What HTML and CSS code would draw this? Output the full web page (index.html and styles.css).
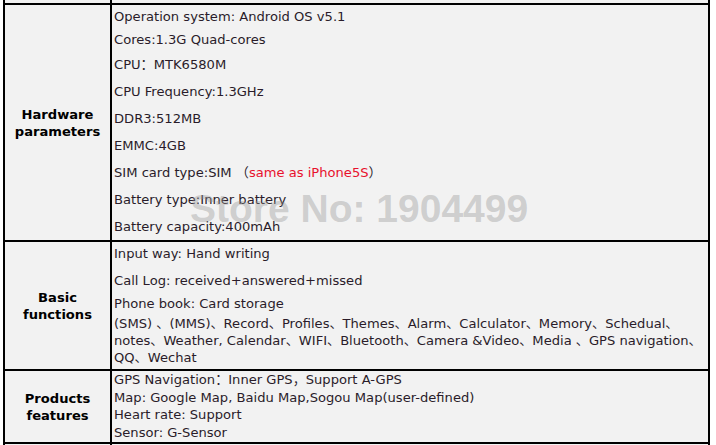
FILE: index.html
```html
<!DOCTYPE html>
<html lang="en">
<head>
  <meta charset="UTF-8">
  <title>Specification</title>
  <link rel="stylesheet" href="styles.css">
</head>
<body>
  <div class="sheet">
    <table class="spec">
      <colgroup>
        <col class="col-label">
        <col class="col-value">
      </colgroup>
      <tr class="row-prev">
        <td class="label"></td>
        <td class="value"></td>
      </tr>
      <tr class="row-hw">
        <td class="label">Hardware<br>parameters</td>
        <td class="value">
          <p class="gap-6">Operation system: Android OS v5.1</p>
          <p class="gap-8">Cores:1.3G Quad-cores</p>
          <p>CPU：MTK6580M</p>
          <p>CPU Frequency:1.3GHz</p>
          <p>DDR3:512MB</p>
          <p>EMMC:4GB</p>
          <p>SIM card type:SIM （<span class="red">same as iPhone5S</span>）</p>
          <p>Battery type:Inner battery</p>
          <p class="last">Battery capacity:400mAh</p>
        </td>
      </tr>
      <tr class="row-basic">
        <td class="label">Basic<br>functions</td>
        <td class="value">
          <p>Input way: Hand writing</p>
          <p class="gap-6">Call Log: received+answered+missed</p>
          <p class="gap-3">Phone book: Card storage</p>
          <p class="last">(SMS) 、(MMS)、Record、Profiles、Themes、Alarm、Calculator、Memory、Schedual、<br>notes、Weather, Calendar、WIFI、Bluetooth、Camera &amp;Video、Media 、GPS navigation、<br>QQ、Wechat</p>
        </td>
      </tr>
      <tr class="row-feat">
        <td class="label">Products<br>features</td>
        <td class="value">
          <div class="line">GPS Navigation：Inner GPS，Support A-GPS</div>
          <div class="line">Map: Google Map, Baidu Map,Sogou Map(user-defined)</div>
          <div class="line">Heart rate: Support</div>
          <div class="line">Sensor: G-Sensor</div>
        </td>
      </tr>
      <tr class="row-next">
        <td class="label"></td>
        <td class="value"></td>
      </tr>
    </table>
    <div class="watermark">Store No: 1904499</div>
  </div>
</body>
</html>
```

FILE: styles.css
```css
body {
  margin: 0;
  background: #ffffff;
  overflow: hidden;
}

.sheet {
  position: relative;
  padding-left: 3px;
  height: 445px;
  overflow: hidden;
}

.spec {
  width: 707px;
  table-layout: fixed;
  border-collapse: separate;
  border-spacing: 0;
  border-left: 2px solid #000;
  margin-top: -35px;
  font-family: "DejaVu Sans", Verdana, "Noto Sans CJK SC", sans-serif;
  font-size: 13.1px;
  color: #2a1c2a;
}

.col-label {
  width: 107px;
}

.spec td {
  background: #f2f2f2;
  border-right: 2px solid #000;
  border-bottom: 2px solid #000;
  padding: 0;
}

.row-prev td {
  height: 38px;
}

.label {
  text-align: center;
  vertical-align: middle;
  font-weight: bold;
  color: #000;
  line-height: 17px;
}

.value {
  vertical-align: top;
  padding-left: 2px !important;
}

.value p {
  margin: 0 0 10px;
  line-height: 17px;
  white-space: nowrap;
}

.value p.gap-6 {
  margin-bottom: 6px;
}

.value p.gap-8 {
  margin-bottom: 8px;
}

.value p.gap-3 {
  margin-bottom: 3px;
}

.value p.last {
  margin-bottom: 0;
}

.row-hw .label {
  height: 235px;
}

.row-hw .value {
  height: 232px;
  padding-top: 3px;
}

.row-basic .label {
  height: 127px;
}

.row-basic .value {
  height: 124px;
  padding-top: 3px;
}

.row-feat td {
  height: 71px;
}

.row-feat .line {
  line-height: 17.5px;
  white-space: nowrap;
}

.row-next td {
  height: 40px;
}

.red {
  color: #e8112d;
}

.watermark {
  position: absolute;
  left: 190px;
  top: 187px;
  font-family: "Liberation Sans", Arial, sans-serif;
  font-weight: bold;
  font-size: 39px;
  color: rgba(150, 150, 150, 0.4);
  white-space: nowrap;
  pointer-events: none;
}
```
